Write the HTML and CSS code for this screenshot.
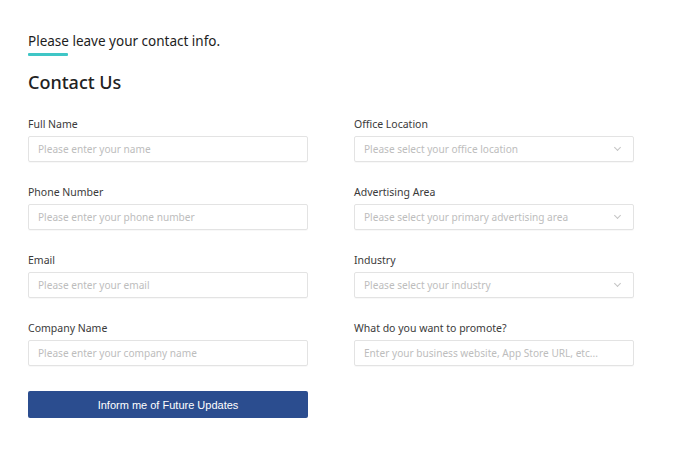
FILE: index.html
```html
<!DOCTYPE html>
<html lang="en">
<head>
<meta charset="utf-8">
<title>Contact Us</title>
<link rel="stylesheet" href="styles.css">
</head>
<body>
<main class="page">
  <div class="intro">
    <p class="intro-text">Please leave your contact info.</p>
    <span class="intro-bar"></span>
  </div>
  <h1 class="title">Contact Us</h1>
  <form class="form">
    <div class="field">
      <label class="label">Full Name</label>
      <div class="control"><span class="ph">Please enter your name</span></div>
    </div>
    <div class="field">
      <label class="label">Office Location</label>
      <div class="control select"><span class="ph">Please select your office location</span><span class="chev"></span></div>
    </div>
    <div class="field">
      <label class="label">Phone Number</label>
      <div class="control"><span class="ph">Please enter your phone number</span></div>
    </div>
    <div class="field">
      <label class="label">Advertising Area</label>
      <div class="control select"><span class="ph">Please select your primary advertising area</span><span class="chev"></span></div>
    </div>
    <div class="field">
      <label class="label">Email</label>
      <div class="control"><span class="ph">Please enter your email</span></div>
    </div>
    <div class="field">
      <label class="label">Industry</label>
      <div class="control select"><span class="ph">Please select your industry</span><span class="chev"></span></div>
    </div>
    <div class="field">
      <label class="label">Company Name</label>
      <div class="control"><span class="ph">Please enter your company name</span></div>
    </div>
    <div class="field">
      <label class="label">What do you want to promote?</label>
      <div class="control"><span class="ph">Enter your business website, App Store URL, etc...</span></div>
    </div>
    <div class="actions">
      <button type="button" class="btn">Inform me of Future Updates</button>
    </div>
  </form>
</main>
</body>
</html>
```
FILE: styles.css
```css
html, body {
  margin: 0;
  padding: 0;
  background: #ffffff;
}
body {
  font-family: "Noto Sans", "Open Sans", sans-serif;
  color: #222;
}
.page {
  padding: 31px 0 0 28px;
}
.intro {
  display: flex;
  flex-direction: column;
}
.intro-text {
  margin: 0;
  font-size: 13.5px;
  line-height: 20px;
  color: #1d1d1d;
}
.intro-bar {
  display: block;
  width: 40px;
  height: 3px;
  margin-top: 2px;
  background: #3fc6c6;
  border-radius: 1px;
}
.title {
  margin: 13px 0 0;
  font-size: 18px;
  line-height: 26px;
  font-weight: 500;
  color: #222;
}
.form {
  display: grid;
  grid-template-columns: 280px 280px;
  column-gap: 46px;
  row-gap: 23px;
  margin-top: 22px;
}
.field {
  display: flex;
  flex-direction: column;
}
.label {
  font-size: 10.5px;
  line-height: 14px;
  color: #3a3a3a;
  margin-bottom: 5px;
}
.control {
  box-sizing: border-box;
  height: 26px;
  border: 1px solid #e3e3e3;
  border-radius: 2px;
  display: flex;
  align-items: center;
  padding: 0 9px;
  box-shadow: 0 1px 1px rgba(0,0,0,0.03);
}
.ph {
  font-size: 10.1px;
  color: #bdbdbd;
  white-space: nowrap;
}
.select {
  justify-content: space-between;
}
.chev {
  width: 4px;
  height: 4px;
  border-right: 1px solid #c4c4c4;
  border-bottom: 1px solid #c4c4c4;
  transform: rotate(45deg);
  margin: -3px 4px 0 0;
}
.actions {
  grid-column: 1;
  padding-top: 2px;
}
.btn {
  width: 280px;
  height: 27px;
  border: none;
  border-radius: 2px;
  background: #2b4d8f;
  color: #fff;
  font-family: "Liberation Sans", Arial, sans-serif;
  font-size: 11px;
  cursor: pointer;
}
```
